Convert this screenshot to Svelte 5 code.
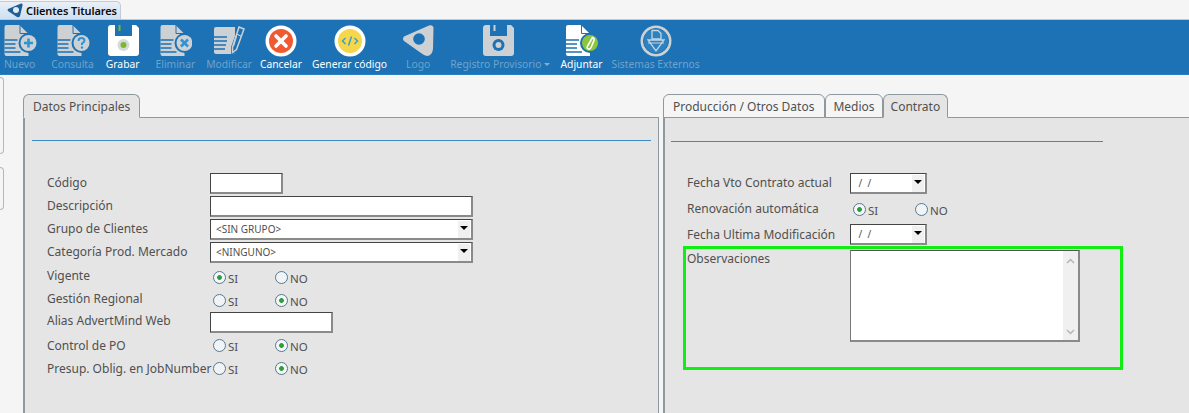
<script>
// toolbar buttons, gap = space before the button
const tools = [
	{ id: 'nuevo', label: 'Nuevo', gap: 0 },
	{ id: 'consulta', label: 'Consulta', gap: 16 },
	{ id: 'grabar', label: 'Grabar', gap: 12, on: true },
	{ id: 'eliminar', label: 'Eliminar', gap: 16 },
	{ id: 'modificar', label: 'Modificar', gap: 11 },
	{ id: 'cancelar', label: 'Cancelar', gap: 8, on: true },
	{ id: 'generar', label: 'Generar código', gap: 10, on: true },
	{ id: 'logo', label: 'Logo', gap: 19 },
	{ id: 'registro', label: 'Registro Provisorio', gap: 20, caret: true },
	{ id: 'adjuntar', label: 'Adjuntar', gap: 10, on: true },
	{ id: 'sistemas', label: 'Sistemas Externos', gap: 9 }
];

const leftRows = [
	{ label: 'Código', type: 'input', width: 73 },
	{ label: 'Descripción', type: 'input', width: 263 },
	{ label: 'Grupo de Clientes', type: 'select', value: '<SIN GRUPO>' },
	{ label: 'Categoría Prod. Mercado', type: 'select', value: '<NINGUNO>' },
	{ label: 'Vigente', type: 'radio', yes: true },
	{ label: 'Gestión Regional', type: 'radio', yes: false },
	{ label: 'Alias AdvertMind Web', type: 'input', width: 123, low: true },
	{ label: 'Control de PO', type: 'radio', yes: false, high: true },
	{ label: 'Presup. Oblig. en JobNumber', type: 'radio', yes: false, high: true }
];
</script>

{#snippet page(fill)}
	<path d="M2 0H15L24 9V31H2Q0 31 0 29V2Q0 0 2 0Z" fill={fill} />
	<path d="M15.500 0V8.500H24" fill="none" stroke="#1c72b5" stroke-width="1" />
	<path d="M0 15H13M0 19H11M0 23H11M0 27H16" stroke="#1c72b5" stroke-width="1.600" />
{/snippet}

{#snippet badge(fill)}
	<circle cx="24" cy="18" r="10" fill="#1c72b5" />
	<circle cx="24" cy="18" r="8" fill={fill} />
{/snippet}

{#snippet floppy(fill, tick, ring, dot)}
	<path d="M3 0H7V11H24V0H28L31 3V28Q31 31 28 31H3Q0 31 0 28V3Q0 0 3 0Z" fill={fill} />
	<rect x="10.500" y="0" width="2" height="6" fill={tick} />
	<circle cx="15.500" cy="20" r="6" fill={ring} />
	<circle cx="15.500" cy="20" r="3" fill={dot} />
{/snippet}

{#snippet icon(id)}
	<svg class="icon" width="34" height="32" viewBox="0 0 34 32">
		{#if id === 'nuevo'}
			<g transform="translate(1.500)">
				{@render page('#cdd1d4')}
				{@render badge('#cdd1d4')}
				<path d="M24 13.500V22.500M19.500 18H28.500" stroke="#2f93d4" stroke-width="2.600" />
			</g>
		{:else if id === 'consulta'}
			<g transform="translate(1.500)">
				{@render page('#cdd1d4')}
				{@render badge('#cdd1d4')}
				<path d="M21 16Q21 13 24 13Q27 13 27 15.500Q27 17 24.500 18.500V20" fill="none" stroke="#2f93d4" stroke-width="2" />
				<circle cx="24.500" cy="22.500" r="1.200" fill="#2f93d4" />
			</g>
		{:else if id === 'eliminar'}
			<g transform="translate(2.500)">
				{@render page('#cdd1d4')}
				{@render badge('#cdd1d4')}
				<path d="M20.500 14.500L27.500 21.500M27.500 14.500L20.500 21.500" stroke="#2f93d4" stroke-width="2.600" />
			</g>
		{:else if id === 'modificar'}
			<g transform="translate(2)">
				<path d="M2 2H21V29H2Q0 29 0 27V4Q0 2 2 2Z" fill="#cdd1d4" />
				<path d="M0 12H13M0 16H13M0 20H12M0 24H11" stroke="#1c72b5" stroke-width="1.600" />
				<path d="M25 0L32 3L23 27L17 31L17 22Z" fill="#1c72b5" />
				<path d="M25 2L30 4L22.500 24.500L18.500 27.500L18.500 22Z" fill="none" stroke="#cdd1d4" stroke-width="1.500" />
				<path d="M22 9L27 11M22.500 11L19.500 21" stroke="#cdd1d4" stroke-width="1.300" />
			</g>
		{:else if id === 'grabar'}
			<g transform="translate(2)">{@render floppy('#ffffff', '#7cb82f', '#d5dadd', '#7cb82f')}</g>
		{:else if id === 'registro'}
			{@render floppy('#cdd1d4', '#cdd1d4', '#1c72b5', '#cdd1d4')}
		{:else if id === 'cancelar'}
			<circle cx="17" cy="16" r="15.500" fill="#ffffff" />
			<circle cx="17" cy="16" r="12" fill="#f15a31" />
			<path d="M12 11L22 21M22 11L12 21" stroke="#ffffff" stroke-width="3.600" stroke-linecap="round" />
		{:else if id === 'generar'}
			<circle cx="17" cy="16" r="15.500" fill="#ffffff" />
			<circle cx="17" cy="16" r="12" fill="#f4d74a" />
			<path d="M12.500 13L9.500 16L12.500 19M21.500 13L24.500 16L21.500 19" fill="none" stroke="#3a9ccc" stroke-width="1.400" />
			<path d="M18.500 11.500L15.500 20.500" stroke="#3a9ccc" stroke-width="1.400" />
		{:else if id === 'logo'}
			<g transform="translate(1)">
				<path d="M2 11.500L27 0.500Q31 -0.500 31.500 3L31 24Q30 31 25 31Q22 30.500 19 28L2 16Q0 14 2 11.500Z" fill="#cdd1d4" />
				<circle cx="17" cy="14" r="5.800" fill="#1c72b5" />
			</g>
		{:else if id === 'adjuntar'}
			<g transform="translate(1)">
				{@render page('#ffffff')}
				{@render badge('#8cc63f')}
				<path d="M26.500 12.500L21.500 21Q20.500 23.500 22.500 24Q24 24.500 25 22.500L28 15.500Q28.500 13 26.500 12.500Z" fill="none" stroke="#ffffff" stroke-width="1.600" />
			</g>
		{:else if id === 'sistemas'}
			<circle cx="17" cy="16" r="15.500" fill="#cdd1d4" />
			<circle cx="17" cy="16" r="12.500" fill="#2f82c0" stroke="#1c72b5" stroke-width="1" />
			<path d="M13 5.500H19L22 8.500V14H13Z" fill="none" stroke="#c4d6e4" stroke-width="1.300" />
			<path d="M9 15H25L17 26Z" fill="none" stroke="#c4d6e4" stroke-width="1.300" />
			<path d="M9 18H25" stroke="#c4d6e4" stroke-width="1" />
		{/if}
	</svg>
{/snippet}

{#snippet radios(name, yes)}
	<label class="opt yes"><input type="radio" {name} checked={yes} /><span>SI</span></label>
	<label class="opt"><input type="radio" {name} checked={!yes} /><span>NO</span></label>
{/snippet}

{#snippet select(text, cls)}
	<div class="select {cls}">
		<span class="val">{text}</span>
		<span class="drop"><i></i></span>
	</div>
{/snippet}

<div class="screen">
	<div class="tabstrip">
		<div class="apptab">
			<svg width="16" height="15" viewBox="0 0 16 15">
				<path d="M1 6L14 0.500Q16 0 15.500 2.500L13 13Q12 15 10 14L1 8Q0 7 1 6Z" fill="#1f5f92" />
				<circle cx="9" cy="7" r="3" fill="#dfeaf3" />
			</svg>
			<span>Clientes Titulares</span>
		</div>
	</div>

	<div class="toolbar">
		{#each tools as t}
			<div class="tool" class:on={t.on} style="margin-left: {t.gap}px">
				{@render icon(t.id)}
				<span class="tool-label">{t.label}{#if t.caret}<i class="caret"></i>{/if}</span>
			</div>
		{/each}
	</div>

	<div class="main">
		<div class="stubs">
			<div class="stub first"></div>
			<div class="stub second"></div>
		</div>

		<section class="panel left">
			<div class="tabs">
				<div class="tab active">Datos Principales</div>
			</div>
			<div class="body">
				<hr class="rule" />
				<div class="rows">
					{#each leftRows as r, i}
						<div class="row" class:low={r.low} class:high={r.high} class:is-radio={r.type === 'radio'}>
							<span class="lbl">{r.label}</span>
							{#if r.type === 'input'}
								<input class="text" type="text" style="width: {r.width}px" />
							{:else if r.type === 'select'}
								{@render select(r.value, 'wide')}
							{:else}
								{@render radios('left' + i, r.yes)}
							{/if}
						</div>
					{/each}
				</div>
			</div>
		</section>

		<section class="panel right">
			<div class="tabs">
				<div class="tab first-tab">Producción / Otros Datos</div>
				<div class="tab tight">Medios</div>
				<div class="tab tight active">Contrato</div>
			</div>
			<div class="body">
				<hr class="rule short" />
				<div class="rows contract">
					<div class="row">
						<span class="lbl">Fecha Vto Contrato actual</span>
						{@render select(' /  /', 'date')}
					</div>
					<div class="row renew is-radio">
						<span class="lbl">Renovación automática</span>
						{@render radios('renew', true)}
					</div>
					<div class="row last">
						<span class="lbl">Fecha Ultima Modificación</span>
						{@render select(' /  /', 'date')}
					</div>
					<div class="marked">
						<span class="lbl">Observaciones</span>
						<div class="memo">
							<textarea></textarea>
							<div class="scroll">
								<svg width="9" height="6" viewBox="0 0 9 6"><path d="M1 5L4.500 1.500L8 5" fill="none" stroke="#b5b5b5" stroke-width="1.500" /></svg>
								<svg width="9" height="6" viewBox="0 0 9 6"><path d="M1 1L4.500 4.500L8 1" fill="none" stroke="#b5b5b5" stroke-width="1.500" /></svg>
							</div>
						</div>
					</div>
				</div>
			</div>
		</section>
	</div>
</div>

<style>
:global(body) {
	overflow: hidden;
	background: #f5f5f5;
}

.screen {
	width: 1189px;
	height: 413px;
	display: flex;
	flex-direction: column;
	overflow: hidden;
	background: #f5f5f5;
	font-family: "Noto Sans", sans-serif;
	font-size: 11px;
	color: #505050;
}

/* top strip with the open window tab */
.tabstrip {
	height: 20px;
	flex: none;
	box-sizing: border-box;
	padding-top: 1px;
	display: flex;
	border-bottom: 1px solid #c3c6d0;
}

.apptab {
	width: 121px;
	height: 18px;
	box-sizing: border-box;
	display: flex;
	align-items: center;
	gap: 3px;
	padding-left: 7px;
	background: linear-gradient(to bottom, #e9eff6, #cfe0f2);
	border: 1px solid #c6cbd2;
	border-bottom: none;
	border-left: none;
	border-radius: 0 5px 0 0;
	font-size: 11px;
	font-weight: 600;
	letter-spacing: -0.1px;
	white-space: nowrap;
	color: #0c0c0c;
}

.toolbar {
	height: 55px;
	flex: none;
	box-sizing: border-box;
	display: flex;
	padding-left: 4px;
	background: #1c72b5;
	border-bottom: 1px solid #2a80c2;
}

.tool {
	display: flex;
	flex-direction: column;
	align-items: center;
	padding-top: 5px;
	white-space: nowrap;
	color: #6ea3cc;
}

.tool.on {
	color: #fff;
}

/* wider than some labels, must not push the button wider */
.icon {
	display: block;
	flex: none;
	margin: 0 -12px;
}

.tool-label {
	font-size: 10.300px;
	line-height: 14px;
}

.caret {
	display: inline-block;
	margin-left: 3px;
	vertical-align: 2px;
	border: 3px solid transparent;
	border-top-color: #7fb0d6;
	border-bottom: none;
}

.main {
	flex: 1;
	display: flex;
	padding-top: 19px;
	min-height: 0;
}

.stubs {
	width: 23px;
	flex: none;
	margin-top: -17px;
	display: flex;
	flex-direction: column;
}

.stub {
	width: 3px;
	background: #f5f5f5;
	border: 1px solid #b4b8bb;
	border-left: none;
	border-radius: 0 4px 4px 0;
}

.stub.first {
	height: 75px;
}

.stub.second {
	height: 41px;
	margin-top: 13px;
}

.panel {
	display: flex;
	flex-direction: column;
}

.panel.left {
	width: 636px;
	margin-right: 4px;
}

.panel.right {
	flex: 1;
}

.tabs {
	display: flex;
	height: 24px;
	flex: none;
	position: relative;
	z-index: 1;
}

.tab {
	height: 24px;
	box-sizing: border-box;
	padding: 3px 9px 0;
	background: #f5f5f5;
	border: 1px solid #8d989f;
	border-radius: 6px 6px 0 0;
	font-size: 12px;
	line-height: 18px;
	color: #505050;
	white-space: nowrap;
}

.tab.first-tab {
	padding-right: 10px;
}

.tab.tight {
	padding: 3px 7px 0;
}

.tab.active {
	background: #e5e5e5;
	border-bottom-color: #e5e5e5;
}

.body {
	flex: 1;
	margin-top: -1px;
	background: #e5e5e5;
	border-top: 1px solid #8d989f;
	border-left: 2px solid #8d989f;
}

.left .body {
	border-right: 1px solid #8d989f;
	padding-right: 7px;
}

.rule {
	height: 1px;
	margin: 22px 0 0 7px;
	border: none;
	background: #3b8ac6;
}

.rule.short {
	width: 432px;
	margin-top: 23px;
	margin-left: 6px;
}

.rows {
	margin-top: 32px;
	padding-left: 22px;
	display: grid;
	grid-auto-rows: 23px;
}

.row {
	display: flex;
	align-items: flex-start;
	font-size: 12px;
}

.lbl {
	width: 163px;
	flex: none;
	margin-top: 1px;
	line-height: 17px;
	white-space: nowrap;
	color: #505050;
}

.row.is-radio .lbl {
	margin-top: 2px;
}

.row.low {
	padding-top: 1px;
}

.row.low .lbl {
	margin-top: 0;
}

.row.high .lbl {
	margin-top: 3px;
}

.text {
	height: 21px;
	box-sizing: border-box;
	padding: 0 3px;
	background: #fff;
	border-style: solid;
	border-width: 1px 2px 2px 1px;
	border-color: #444 #8a8a8a #8a8a8a #444;
	border-radius: 0;
	outline: none;
}

.select {
	height: 21px;
	box-sizing: border-box;
	display: flex;
	align-items: center;
	background: #fff;
	border-style: solid;
	border-width: 1px 2px 2px 1px;
	border-color: #444 #8a8a8a #8a8a8a #444;
}

.select.wide {
	width: 263px;
}

.select.date {
	width: 77px;
}

.val {
	flex: 1;
	padding-left: 5px;
	font-size: 10px;
	line-height: 18px;
	white-space: pre;
	color: #505050;
}

.drop {
	width: 12px;
	height: 17px;
	margin-right: 1px;
	display: flex;
	align-items: center;
	justify-content: center;
	background: #f0f0f0;
}

.drop i {
	border: 4px solid transparent;
	border-top: 4px solid #000;
	border-bottom: none;
	margin-bottom: 2px;
}

.opt {
	display: flex;
	align-items: center;
	width: 62px;
	height: 15px;
	margin-top: 5px;
	padding-left: 3px;
	box-sizing: border-box;
	font-size: 11.500px;
	color: #505050;
}

.row.high .opt {
	margin-top: 4px;
}

.opt span {
	margin-left: 2px;
	margin-top: 2px;
}

.opt input {
	appearance: none;
	width: 13px;
	height: 13px;
	margin: 0;
	flex: none;
	border: 1px solid #59788e;
	border-radius: 50%;
	background: #f1f4f6;
}

.opt input:checked {
	background: radial-gradient(circle, #2d9e3c 0 2px, #f4f7f8 2.800px);
}

/* right panel rows do not keep the 23px pitch */
.rows.contract {
	margin-top: 31px;
	display: block;
}

.contract .row {
	height: 21px;
}

.contract .lbl {
	margin-top: 1px;
}

.contract .row.renew {
	height: 25px;
	margin-top: 5px;
}

.contract .row.renew .lbl {
	margin-top: 1px;
}

.contract .renew .opt {
	margin-top: 3px;
}

.contract .row.last .lbl {
	margin-top: 2px;
}

.marked {
	width: 440px;
	height: 124px;
	box-sizing: border-box;
	margin: 1px 0 0 -4px;
	padding: 1px 0 0 1px;
	border: 3px solid #11ee11;
	display: flex;
	align-items: flex-start;
	font-size: 12px;
}

.marked .lbl {
	margin-top: 0;
}

.memo {
	width: 230px;
	height: 92px;
	box-sizing: border-box;
	display: flex;
	background: #fff;
	border-style: solid;
	border-width: 1px 2px 2px 1px;
	border-color: #555 #8a8a8a #8a8a8a #777;
}

.memo textarea {
	flex: 1;
	min-width: 0;
	margin: 0;
	padding: 0;
	border: none;
	outline: none;
	resize: none;
	background: #fff;
}

.scroll {
	width: 15px;
	flex: none;
	box-sizing: border-box;
	padding: 7px 0 5px;
	display: flex;
	flex-direction: column;
	align-items: center;
	justify-content: space-between;
	background: #f0f0f0;
}
</style>
